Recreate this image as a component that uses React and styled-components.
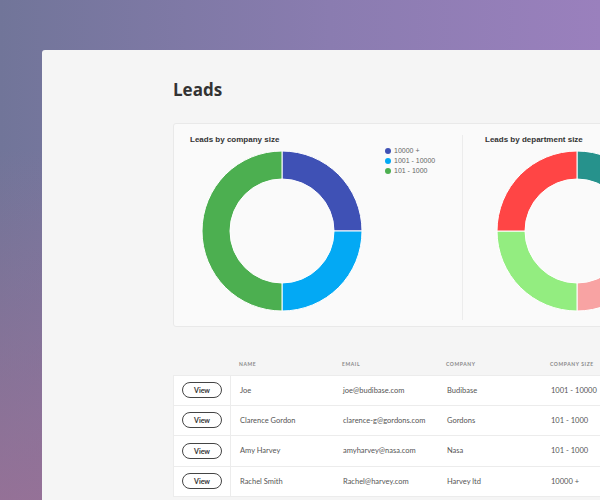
import React from 'react'
import styled, { createGlobalStyle } from 'styled-components'

const GlobalStyle = createGlobalStyle`
  html, body {
    margin: 0;
    padding: 0;
  }
  body {
    font-family: Lato, "Open Sans", sans-serif;
  }
`

const companySlices = [
  { value: 25, color: '#3f51b5' },
  { value: 25, color: '#03a9f4' },
  { value: 50, color: '#4caf50' },
]

const departmentSlices = [
  { value: 25, color: '#26928c' },
  { value: 25, color: '#f8a3a3' },
  { value: 25, color: '#93ed80' },
  { value: 25, color: '#ff4545' },
]

const legend = [
  { label: '10000 +', color: '#3f51b5' },
  { label: '1001 - 10000', color: '#03a9f4' },
  { label: '101 - 1000', color: '#4caf50' },
]

const leads = [
  { name: 'Joe', email: 'joe@budibase.com', company: 'Budibase', size: '1001 - 10000' },
  { name: 'Clarence Gordon', email: 'clarence-g@gordons.com', company: 'Gordons', size: '101 - 1000' },
  { name: 'Amy Harvey', email: 'amyharvey@nasa.com', company: 'Nasa', size: '101 - 1000' },
  { name: 'Rachel Smith', email: 'Rachel@harvey.com', company: 'Harvey ltd', size: '10000 +' },
]

const point = (cx, cy, r, deg) => {
  const rad = ((deg - 90) * Math.PI) / 180
  return [cx + r * Math.cos(rad), cy + r * Math.sin(rad)]
}

const arcPath = (cx, cy, ro, ri, a0, a1) => {
  const large = a1 - a0 > 180 ? 1 : 0
  const [x0, y0] = point(cx, cy, ro, a0)
  const [x1, y1] = point(cx, cy, ro, a1)
  const [x2, y2] = point(cx, cy, ri, a1)
  const [x3, y3] = point(cx, cy, ri, a0)
  return `M${x0} ${y0} A${ro} ${ro} 0 ${large} 1 ${x1} ${y1} L${x2} ${y2} A${ri} ${ri} 0 ${large} 0 ${x3} ${y3} Z`
}

function Donut({ slices }) {
  const total = slices.reduce((s, x) => s + x.value, 0)
  let angle = 0
  return (
    <svg width="162" height="162" viewBox="0 0 162 162">
      {slices.map((s, i) => {
        const a0 = angle
        const a1 = angle + (s.value / total) * 360
        angle = a1
        return (
          <path
            key={i}
            d={arcPath(81, 81, 80, 52, a0, a1)}
            fill={s.color}
            stroke="#fff"
            strokeWidth="1"
          />
        )
      })}
    </svg>
  )
}

export default function App() {
  return (
    <Page>
      <GlobalStyle />
      <Window>
        <Title>Leads</Title>
        <ChartCard>
          <ChartSection $width="289px" $pad="16px">
            <ChartTitle>Leads by company size</ChartTitle>
            <ChartBody>
              <DonutWrap $left="11px">
                <Donut slices={companySlices} />
              </DonutWrap>
              <Legend>
                {legend.map((l) => (
                  <LegendItem key={l.label}>
                    <Dot $color={l.color} />
                    {l.label}
                  </LegendItem>
                ))}
              </Legend>
            </ChartBody>
          </ChartSection>
          <ChartSection $width="300px" $pad="22px">
            <ChartTitle>Leads by department size</ChartTitle>
            <ChartBody>
              <DonutWrap $left="11px">
                <Donut slices={departmentSlices} />
              </DonutWrap>
            </ChartBody>
          </ChartSection>
        </ChartCard>

        <Table>
          <HeaderRow>
            <HeadCell />
            <HeadCell>Name</HeadCell>
            <HeadCell>Email</HeadCell>
            <HeadCell>Company</HeadCell>
            <HeadCell>Company size</HeadCell>
          </HeaderRow>
          {leads.map((l) => (
            <Row key={l.email}>
              <ButtonCell>
                <ViewButton>View</ViewButton>
              </ButtonCell>
              <Cell>{l.name}</Cell>
              <Cell>{l.email}</Cell>
              <Cell>{l.company}</Cell>
              <Cell>{l.size}</Cell>
            </Row>
          ))}
        </Table>
      </Window>
    </Page>
  )
}

const Page = styled.div`
  width: 600px;
  height: 500px;
  overflow: hidden;
  box-sizing: border-box;
  padding: 50px 0 0 42px;
  background:
    linear-gradient(180deg, rgba(160, 112, 150, 0) 30%, rgba(160, 112, 150, 0.75) 100%),
    linear-gradient(90deg, #717599 0%, #8a7cb0 55%, #9a80bd 100%);
`

const Window = styled.div`
  height: 450px;
  box-sizing: border-box;
  background: #f5f5f5;
  border-top-left-radius: 3px;
  padding: 28px 0 0 131px;
  overflow: hidden;
`

const Title = styled.h1`
  margin: 0;
  font-family: "Open Sans", sans-serif;
  font-size: 17px;
  font-weight: 700;
  line-height: 24px;
  color: #333;
`

const ChartCard = styled.div`
  display: flex;
  width: 620px;
  height: 204px;
  margin-top: 21px;
  box-sizing: border-box;
  background: #fafafa;
  border: 1px solid #e9e9e9;
  border-radius: 3px;
  padding: 11px 0 6px;
`

const ChartSection = styled.div`
  flex: 0 0 ${(p) => p.$width};
  box-sizing: border-box;
  padding-left: ${(p) => p.$pad};
  border-right: 1px solid #ececec;
`

const ChartTitle = styled.div`
  font-family: "Liberation Sans", Arial, sans-serif;
  font-size: 8px;
  font-weight: 700;
  color: #333;
  line-height: 10px;
`

const ChartBody = styled.div`
  display: flex;
  align-items: flex-start;
  margin-top: 5px;
`

const DonutWrap = styled.div`
  margin-left: ${(p) => p.$left};
  line-height: 0;
`

const Legend = styled.div`
  display: flex;
  flex-direction: column;
  gap: 2px;
  margin-left: 22px;
  margin-top: -3px;
`

const LegendItem = styled.div`
  display: flex;
  align-items: center;
  gap: 3px;
  font-family: "Liberation Sans", Arial, sans-serif;
  font-size: 7px;
  line-height: 8px;
  color: #666;
`

const Dot = styled.span`
  width: 6px;
  height: 6px;
  border-radius: 50%;
  background: ${(p) => p.$color};
`

const Table = styled.div`
  margin-top: 25px;
  width: 560px;
`

const gridCols = '57px 103px 104px 104px 104px'

const HeaderRow = styled.div`
  display: grid;
  grid-template-columns: ${gridCols};
  height: 22px;
  align-items: center;
  padding-top: 1px;
`

const HeadCell = styled.div`
  padding-left: 9px;
  font-size: 5px;
  font-weight: 700;
  letter-spacing: 0.6px;
  text-transform: uppercase;
  color: #888;
`

const Row = styled.div`
  display: grid;
  grid-template-columns: ${gridCols};
  height: 30.5px;
  box-sizing: border-box;
  background: #fff;
  border: 1px solid #ececec;
  border-top: none;
  &:nth-child(2) {
    border-top: 1px solid #ececec;
  }
`

const Cell = styled.div`
  display: flex;
  align-items: center;
  padding-left: 9px;
  font-size: 7.5px;
  color: #555;
  white-space: nowrap;
`

const ButtonCell = styled.div`
  display: flex;
  align-items: center;
  padding-left: 8px;
  border-right: 1px solid #ececec;
`

const ViewButton = styled.button`
  width: 40px;
  height: 16px;
  padding: 0;
  border: 1px solid #444;
  border-radius: 9px;
  background: #fff;
  font-family: Lato, sans-serif;
  font-size: 7px;
  font-weight: 700;
  color: #333;
`
